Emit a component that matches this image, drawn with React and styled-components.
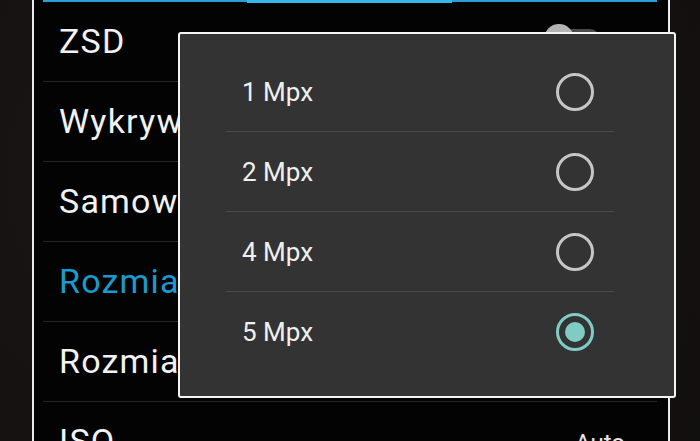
import React from "react";
import styled, { createGlobalStyle } from "styled-components";

const Global = createGlobalStyle`
  html, body {
    margin: 0;
    padding: 0;
    background: #151111;
    overflow: hidden;
  }
  body {
    font-family: Roboto, "Noto Sans", sans-serif;
  }
`;

const Screen = styled.div`
  position: relative;
  width: 700px;
  height: 441px;
  overflow: hidden;
  display: flex;
  background: radial-gradient(circle at 30% 40%, #1b1615 0%, #120f0f 100%);
`;

const Panel = styled.div`
  margin-left: 32px;
  width: 638px;
  box-sizing: border-box;
  border-left: 2px solid #ececec;
  border-right: 2px solid #ececec;
  background: #030303;
  padding: 0 11px 0 9px;
  display: flex;
  flex-direction: column;
`;

const Strip = styled.div`
  display: flex;
  align-items: flex-start;
  height: 2px;
`;

const StripPart = styled.div`
  flex: ${(p) => p.$w};
  height: ${(p) => (p.$active ? "3px" : "2px")};
  background: ${(p) => (p.$active ? "#37b6e8" : "#2a9fd6")};
`;

const Row = styled.div`
  height: 78px;
  flex-shrink: 0;
  border-bottom: 1px solid #262626;
  padding: 0 32px 1px 16px;
  display: flex;
  align-items: center;
  justify-content: space-between;
`;

const Label = styled.span`
  font-size: 34px;
  letter-spacing: 1.2px;
  color: ${(p) => (p.$active ? "#1c9ad0" : "#f2f2f2")};
  white-space: nowrap;
`;

const Value = styled.span`
  font-size: 24px;
  color: #e6e6e6;
  margin-top: 4px;
`;

const Switch = styled.div`
  position: relative;
  width: 56px;
  height: 20px;
  border-radius: 10px;
  background: #4a4a4a;
  margin-right: 25px;
  margin-top: -4px;
`;

const Thumb = styled.div`
  position: absolute;
  left: 0;
  top: -5px;
  width: 30px;
  height: 30px;
  border-radius: 50%;
  background: #b4b4b4;
`;

const Dialog = styled.div`
  position: absolute;
  left: 178px;
  top: 32px;
  width: 498px;
  height: 366px;
  box-sizing: border-box;
  border: 2px solid #f4f4f4;
  border-radius: 3px;
  background: #333333;
  padding: 18px 60px 0 46px;
  display: flex;
  flex-direction: column;
`;

const Option = styled.div`
  height: 79px;
  flex-shrink: 0;
  border-bottom: ${(p) => (p.$last ? "none" : "1px solid #4b4b4b")};
  padding: 0 20px 0 16px;
  display: flex;
  align-items: center;
  justify-content: space-between;
`;

const OptionText = styled.span`
  font-size: 26px;
  color: #f0f0f0;
`;

const Radio = styled.span`
  width: 38px;
  height: 38px;
  box-sizing: border-box;
  border-radius: 50%;
  border: 3px solid ${(p) => (p.$checked ? "#80cbc4" : "#c6c6c6")};
  display: flex;
  align-items: center;
  justify-content: center;
  &::after {
    content: "";
    display: ${(p) => (p.$checked ? "block" : "none")};
    width: 20px;
    height: 20px;
    border-radius: 50%;
    background: #80cbc4;
  }
`;

const settings = [
  { label: "ZSD", toggle: true },
  { label: "Wykrywanie twarzy" },
  { label: "Samowyzwalacz" },
  { label: "Rozmiar zdjęcia", active: true },
  { label: "Rozmiar wideo" },
  { label: "ISO", value: "Auto" },
];

const sizes = ["1 Mpx", "2 Mpx", "4 Mpx", "5 Mpx"];

export default function App() {
  const selected = "5 Mpx";
  return (
    <>
      <Global />
      <Screen>
        <Panel>
          <Strip>
            <StripPart $w={204} />
            <StripPart $w={205} $active />
            <StripPart $w={205} />
          </Strip>
          {settings.map((s) => (
            <Row key={s.label}>
              <Label $active={s.active}>{s.label}</Label>
              {s.toggle && (
                <Switch>
                  <Thumb />
                </Switch>
              )}
              {s.value && <Value>{s.value}</Value>}
            </Row>
          ))}
        </Panel>
        <Dialog>
          {sizes.map((s, i) => (
            <Option key={s} $last={i === sizes.length - 1}>
              <OptionText>{s}</OptionText>
              <Radio $checked={s === selected} />
            </Option>
          ))}
        </Dialog>
      </Screen>
    </>
  );
}
